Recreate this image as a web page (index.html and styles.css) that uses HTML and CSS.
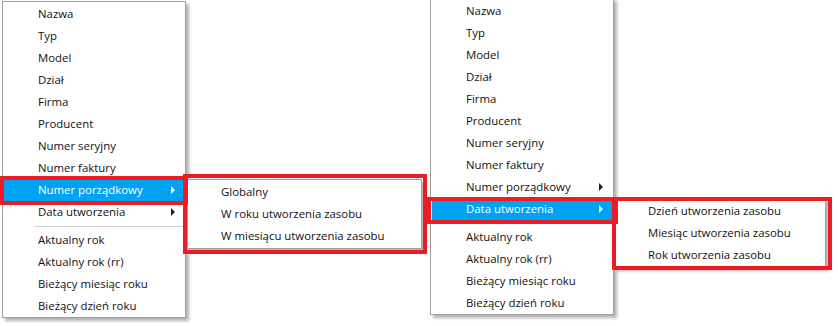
FILE: index.html
```html
<!DOCTYPE html>
<html lang="pl">
<head>
<meta charset="utf-8">
<title>Menu kontekstowe</title>
<link rel="stylesheet" href="styles.css">
</head>
<body>
<div class="desk">
  <div class="menu menu-left">
    <div class="item">Nazwa</div>
    <div class="item">Typ</div>
    <div class="item">Model</div>
    <div class="item">Dział</div>
    <div class="item">Firma</div>
    <div class="item">Producent</div>
    <div class="item">Numer seryjny</div>
    <div class="item">Numer faktury</div>
    <div class="item active">Numer porządkowy<span class="arrow"></span></div>
    <div class="item">Data utworzenia<span class="arrow"></span></div>
    <div class="sep"></div>
    <div class="item">Aktualny rok</div>
    <div class="item">Aktualny rok (rr)</div>
    <div class="item">Bieżący miesiąc roku</div>
    <div class="item">Bieżący dzień roku</div>
  </div>

  <div class="menu sub sub-left">
    <div class="item">Globalny</div>
    <div class="item">W roku utworzenia zasobu</div>
    <div class="item">W miesiącu utworzenia zasobu</div>
  </div>

  <div class="menu menu-right">
    <div class="item">Nazwa</div>
    <div class="item">Typ</div>
    <div class="item">Model</div>
    <div class="item">Dział</div>
    <div class="item">Firma</div>
    <div class="item">Producent</div>
    <div class="item">Numer seryjny</div>
    <div class="item">Numer faktury</div>
    <div class="item">Numer porządkowy<span class="arrow"></span></div>
    <div class="item active">Data utworzenia<span class="arrow"></span></div>
    <div class="sep"></div>
    <div class="item">Aktualny rok</div>
    <div class="item">Aktualny rok (rr)</div>
    <div class="item">Bieżący miesiąc roku</div>
    <div class="item">Bieżący dzień roku</div>
  </div>

  <div class="menu sub sub-right">
    <div class="item">Dzień utworzenia zasobu</div>
    <div class="item">Miesiąc utworzenia zasobu</div>
    <div class="item">Rok utworzenia zasobu</div>
  </div>

  <div class="mark mark-1"></div>
  <div class="mark mark-2"></div>
  <div class="mark mark-3"></div>
  <div class="mark mark-4"></div>
</div>
</body>
</html>
```

FILE: styles.css
```css
html, body {
  margin: 0;
  padding: 0;
  background: #ffffff;
}

.desk {
  position: relative;
  width: 838px;
  height: 326px;
  overflow: hidden;
  font-family: "Open Sans", "Noto Sans", "DejaVu Sans", sans-serif;
  font-size: 11.4px;
  color: #111111;
}

.menu {
  position: absolute;
  box-sizing: border-box;
  display: flex;
  flex-direction: column;
  background: #ffffff;
  border: 1px solid #a0a0a0;
  padding: 1px 0 0;
  box-shadow: 3px 3px 3px rgba(0, 0, 0, 0.3);
}

.menu-left {
  left: 2px;
  top: 1px;
  width: 184px;
  height: 317px;
}

.menu-right {
  left: 430px;
  top: -2px;
  width: 184px;
  height: 317px;
}

.sub {
  padding: 1px 0;
}

.sub-left {
  left: 187px;
  top: 179px;
  width: 235px;
  height: 70px;
}

.sub-right {
  left: 614px;
  top: 198px;
  width: 212px;
  height: 70px;
}

.item {
  display: flex;
  align-items: center;
  height: 22px;
  margin: 0 1px;
  padding-left: 34px;
  white-space: nowrap;
  line-height: 22px;
}

.sub .item {
  padding-left: 32px;
}

.item.active {
  background: #00a2f2;
  color: #ffffff;
}

.arrow {
  margin-left: auto;
  margin-right: 9px;
  width: 0;
  height: 0;
  border-top: 4px solid transparent;
  border-bottom: 4px solid transparent;
  border-left: 4px solid #222222;
}

.item.active .arrow {
  border-left-color: #ffffff;
}

.sep {
  height: 1px;
  margin: 3px 1px 2px 32px;
  background: #cfcfcf;
}

.mark {
  position: absolute;
  box-sizing: border-box;
  border: 4px solid #ed1c24;
}

.mark-1 {
  left: 0;
  top: 176px;
  width: 188px;
  height: 29px;
}

.mark-2 {
  left: 183px;
  top: 174px;
  width: 244px;
  height: 80px;
}

.mark-3 {
  left: 427px;
  top: 197px;
  width: 191px;
  height: 27px;
}

.mark-4 {
  left: 612px;
  top: 197px;
  width: 220px;
  height: 73px;
}
```
